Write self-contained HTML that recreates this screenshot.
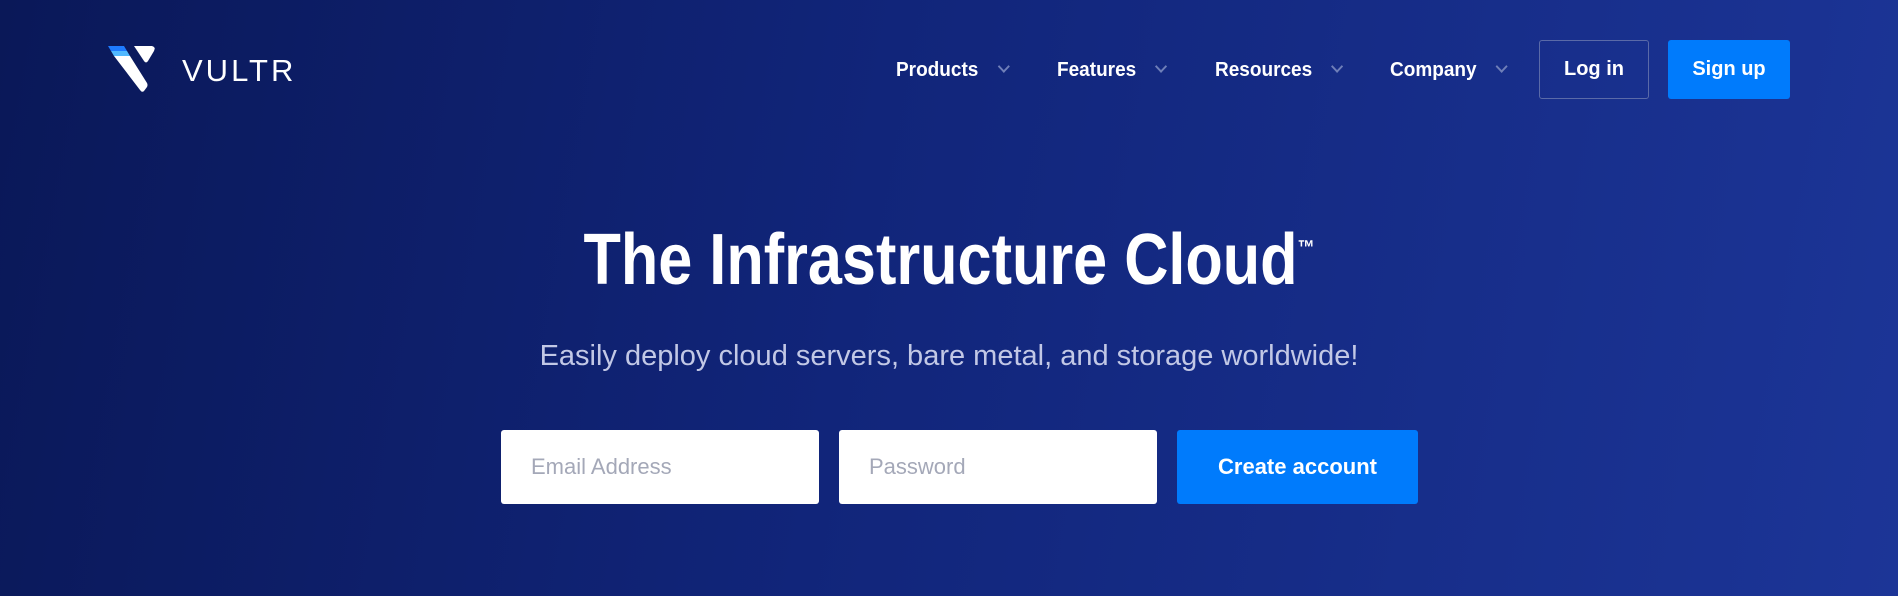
<!DOCTYPE html>
<html><head><meta charset="utf-8"><style>
*{margin:0;padding:0;box-sizing:border-box}
body{width:1898px;height:596px;overflow:hidden;font-family:"Liberation Sans",sans-serif;background:linear-gradient(100deg,#0a1858 0%,#11257a 45%,#1c3597 100%);position:relative;color:#fff}
.abs{position:absolute}
.nav{font-weight:bold;font-size:20px;top:58px;line-height:24px;transform:scaleX(.95);transform-origin:left}
.chev{display:inline-block;width:9px;height:9px;border-right:2px solid #6f7fb8;border-bottom:2px solid #6f7fb8;transform:rotate(45deg);margin-left:22px;position:relative;top:-5px}
.btn{position:absolute;top:40px;height:59px;border-radius:3px;font-weight:bold;font-size:20px;display:flex;align-items:center;justify-content:center}
.inp{position:absolute;top:430px;height:74px;background:#fff;border-radius:3px;color:#a4a8b8;font-size:22px;padding-left:30px;display:flex;align-items:center}
</style></head><body>
<svg class="abs" style="left:108px;top:45px" width="50" height="48" viewBox="0 0 50 48">
<path d="M0 1 L16 1 L19 6 L3 6 Z" fill="#1e7bff"/>
<path d="M3 6 L19 6 L22 11 L6 11 Z" fill="#51b9ff"/>
<path d="M6 11 L22 11 L39 38 Q40 40 39 42 L36 46 Q34 48 32 45 Z" fill="#fff"/>
<path d="M26 1 L44 1 Q48 2 46 6 L40 16 Q38 19 36 16 Z" fill="#fff"/>
</svg>
<div class="abs" style="left:182px;top:55px;font-size:31px;letter-spacing:3px;line-height:32px">VULTR</div>
<div class="abs nav" style="left:896px">Products<span class="chev"></span></div>
<div class="abs nav" style="left:1057px">Features<span class="chev"></span></div>
<div class="abs nav" style="left:1215px">Resources<span class="chev"></span></div>
<div class="abs nav" style="left:1390px">Company<span class="chev"></span></div>
<div class="btn" style="left:1539px;width:110px;border:1px solid #5a6aa8">Log in</div>
<div class="btn" style="left:1668px;width:122px;background:#007bfc">Sign up</div>
<div class="abs" style="left:0;width:1898px;top:220px;text-align:center;font-weight:bold;font-size:72px;line-height:80px"><span style="display:inline-block;transform:scaleX(.85)">The Infrastructure Cloud<sup style="font-size:20px;position:relative;top:-30px;vertical-align:baseline">™</sup></span></div>
<div class="abs" style="left:0;width:1898px;top:338px;text-align:center;font-size:29px;line-height:36px;color:#c2c8e6">Easily deploy cloud servers, bare metal, and storage worldwide!</div>
<div class="inp" style="left:501px;width:318px">Email Address</div>
<div class="inp" style="left:839px;width:318px">Password</div>
<div class="abs" style="left:1177px;top:430px;width:241px;height:74px;background:#007bfc;border-radius:3px;display:flex;align-items:center;justify-content:center;font-weight:bold;font-size:22px">Create account</div>
</body></html>
